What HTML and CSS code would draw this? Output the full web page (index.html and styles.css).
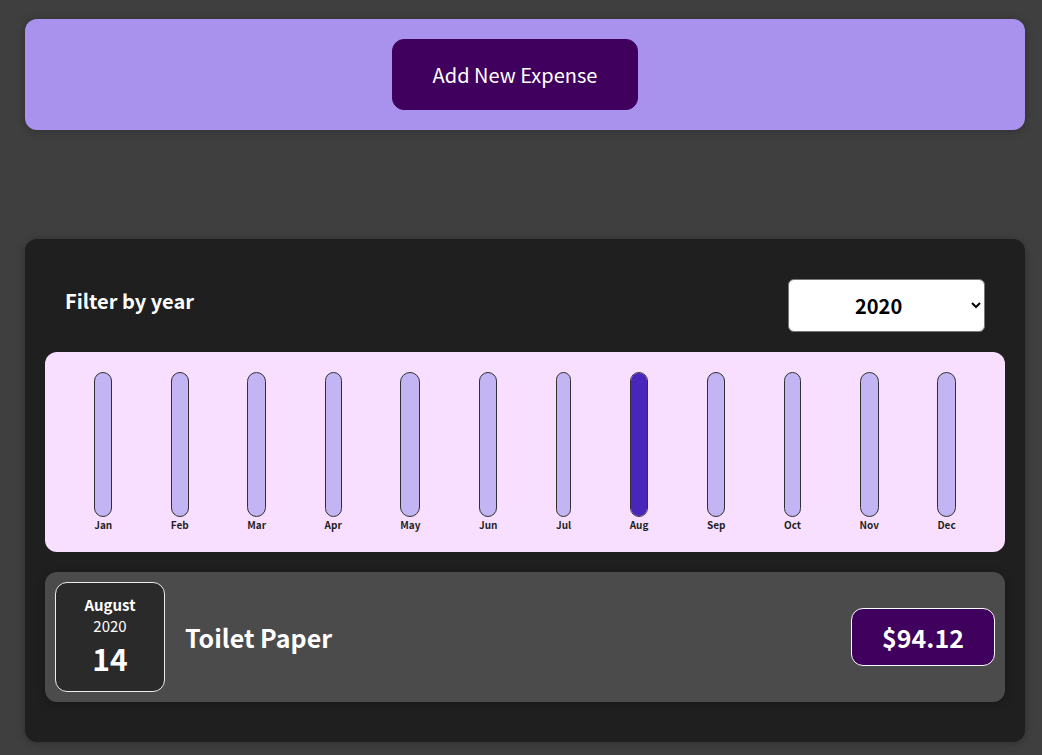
FILE: index.html
```html
<!DOCTYPE html>
<html lang="en">
<head>
<meta charset="utf-8">
<title>Expenses</title>
<link rel="stylesheet" href="styles.css">
</head>
<body>
<div class="root">
  <div class="new-expense">
    <button class="new-expense__btn">Add New Expense</button>
  </div>
  <div class="expenses">
    <div class="expenses-filter">
      <div class="expenses-filter__control">
        <label>Filter by year</label>
        <select>
          <option>2022</option>
          <option>2021</option>
          <option selected>2020</option>
          <option>2019</option>
        </select>
      </div>
    </div>
    <div class="chart">
      <div class="chart-bar"><div class="chart-bar__inner"><div class="chart-bar__fill" style="height:0%"></div></div><div class="chart-bar__label">Jan</div></div>
      <div class="chart-bar"><div class="chart-bar__inner"><div class="chart-bar__fill" style="height:0%"></div></div><div class="chart-bar__label">Feb</div></div>
      <div class="chart-bar"><div class="chart-bar__inner"><div class="chart-bar__fill" style="height:0%"></div></div><div class="chart-bar__label">Mar</div></div>
      <div class="chart-bar"><div class="chart-bar__inner"><div class="chart-bar__fill" style="height:0%"></div></div><div class="chart-bar__label">Apr</div></div>
      <div class="chart-bar"><div class="chart-bar__inner"><div class="chart-bar__fill" style="height:0%"></div></div><div class="chart-bar__label">May</div></div>
      <div class="chart-bar"><div class="chart-bar__inner"><div class="chart-bar__fill" style="height:0%"></div></div><div class="chart-bar__label">Jun</div></div>
      <div class="chart-bar"><div class="chart-bar__inner"><div class="chart-bar__fill" style="height:0%"></div></div><div class="chart-bar__label">Jul</div></div>
      <div class="chart-bar"><div class="chart-bar__inner"><div class="chart-bar__fill" style="height:100%"></div></div><div class="chart-bar__label">Aug</div></div>
      <div class="chart-bar"><div class="chart-bar__inner"><div class="chart-bar__fill" style="height:0%"></div></div><div class="chart-bar__label">Sep</div></div>
      <div class="chart-bar"><div class="chart-bar__inner"><div class="chart-bar__fill" style="height:0%"></div></div><div class="chart-bar__label">Oct</div></div>
      <div class="chart-bar"><div class="chart-bar__inner"><div class="chart-bar__fill" style="height:0%"></div></div><div class="chart-bar__label">Nov</div></div>
      <div class="chart-bar"><div class="chart-bar__inner"><div class="chart-bar__fill" style="height:0%"></div></div><div class="chart-bar__label">Dec</div></div>
    </div>
    <ul class="expenses-list">
      <li class="expense-item">
        <div class="expense-date">
          <div class="expense-date__month">August</div>
          <div class="expense-date__year">2020</div>
          <div class="expense-date__day">14</div>
        </div>
        <div class="expense-item__description">
          <h2>Toilet Paper</h2>
          <div class="expense-item__price">$94.12</div>
        </div>
      </li>
    </ul>
  </div>
</div>
</body>
</html>
```
FILE: styles.css
```css
* {
  box-sizing: border-box;
}

html {
  font-family: "Noto Sans CJK JP", "Noto Sans", sans-serif;
  font-size: 20px;
}

body {
  margin: 0;
  background-color: #3f3f3f;
}

.root {
  padding: 19px 17px 13px 25px;
}

.new-expense {
  background-color: #a892ee;
  padding: 20px;
  width: 1000px;
  border-radius: 12px;
  text-align: center;
  box-shadow: 0 1px 8px rgba(0, 0, 0, 0.25);
}

.new-expense__btn {
  font: inherit;
  cursor: pointer;
  padding: 20px 40px;
  border: 1px solid #40005d;
  background-color: #40005d;
  color: white;
  border-radius: 12px;
  margin-right: 20px;
}

.expenses {
  margin-top: 109px;
  width: 1000px;
  padding: 20px;
  background-color: #1f1f1f;
  border-radius: 12px;
  box-shadow: 0 1px 8px rgba(0, 0, 0, 0.25);
}

.expenses-filter {
  color: white;
  padding: 0 20px;
}

.expenses-filter__control {
  display: flex;
  width: 100%;
  align-items: center;
  justify-content: space-between;
  margin: 20px 0;
}

.expenses-filter label {
  font-weight: bold;
  margin-bottom: 10px;
}

.expenses-filter select {
  font: inherit;
  font-weight: bold;
  padding: 10px 58px 10px 62px;
  border-radius: 6px;
  border: 1px solid #767676;
  background-color: #fff;
  color: #000;
  width: 197px;
  height: 53px;
}

.chart {
  padding: 20px;
  border-radius: 12px;
  background-color: #f8dfff;
  text-align: center;
  display: flex;
  justify-content: space-around;
  height: 200px;
}

.chart-bar {
  height: 100%;
  display: flex;
  flex-direction: column;
  align-items: center;
}

.chart-bar__inner {
  height: 100%;
  width: 100%;
  border: 1px solid #313131;
  border-radius: 12px;
  background-color: #c3b4f3;
  overflow: hidden;
  display: flex;
  flex-direction: column;
  justify-content: flex-end;
}

.chart-bar__fill {
  background-color: #4826b9;
  width: 100%;
}

.chart-bar__label {
  font-weight: bold;
  font-size: 10px;
  text-align: center;
  color: #1f1f1f;
}

.expenses-list {
  list-style: none;
  padding: 0;
  margin: 0;
}

.expense-item {
  display: flex;
  justify-content: space-between;
  align-items: center;
  box-shadow: 0 2px 8px rgba(0, 0, 0, 0.25);
  padding: 10px;
  margin: 20px 0;
  border-radius: 12px;
  background-color: #4b4b4b;
}

.expense-date {
  display: flex;
  flex-direction: column;
  width: 110px;
  height: 110px;
  border: 1px solid #ececec;
  background-color: #2a2a2a;
  color: white;
  border-radius: 12px;
  align-items: center;
  justify-content: center;
}

.expense-date__month {
  font-size: 15px;
  font-weight: bold;
}

.expense-date__year {
  font-size: 15px;
}

.expense-date__day {
  font-size: 30px;
  font-weight: bold;
}

.expense-item__description {
  display: flex;
  align-items: center;
  justify-content: flex-start;
  flex: 1;
}

.expense-item__description h2 {
  font-size: 25px;
  flex: 1;
  margin: 0 20px;
  color: white;
}

.expense-item__price {
  font-size: 25px;
  font-weight: bold;
  color: white;
  background-color: #40005d;
  border: 1px solid white;
  padding: 10px 30px;
  border-radius: 12px;
}
```
